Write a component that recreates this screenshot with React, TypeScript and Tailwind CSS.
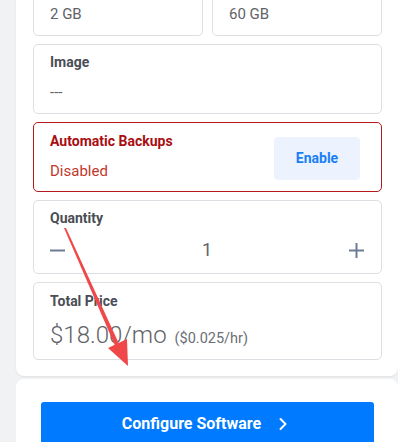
import { ChevronRight } from 'lucide-react';

function InfoCard({ label, value }: { label: string; value: string }) {
  return (
    <div className="h-[70px] rounded-[5px] border border-[#dcdfe3] bg-white px-[16px] pt-[7px]">
      <div className="text-[14px] font-bold leading-[20px] text-[#4a4e55]">{label}</div>
      <div className="mt-[8px] text-[15px] leading-[24px] text-[#5f6368]">{value}</div>
    </div>
  );
}

export default function App() {
  return (
    <div
      className="relative flex h-[442px] w-[398px] overflow-hidden bg-[#f1f2f4] pl-[16px]"
      style={{ fontFamily: 'Roboto, "Liberation Sans", sans-serif' }}
    >
      <div className="flex min-w-0 flex-1 flex-col">
        {/* Summary panel (top scrolled out of view) */}
        <div className="-mt-[34px] rounded-b-[8px] bg-white pb-[16px] pl-[17px] pr-[16px] shadow-[0_1px_2px_rgba(0,0,0,0.08)]">
          <div className="flex flex-col gap-2">
            <div className="grid grid-cols-2 gap-[9px]">
              <InfoCard label="Memory" value="2 GB" />
              <InfoCard label="Storage" value="60 GB" />
            </div>

            <InfoCard label="Image" value="---" />

            {/* Backups */}
            <div className="flex h-[70px] items-center justify-between rounded-[5px] border border-[#b3191b] bg-white pl-[16px] pr-[21px]">
              <div className="-mt-[3px]">
                <div className="text-[14px] font-bold leading-[20px] text-[#a80e12]">Automatic Backups</div>
                <div className="mt-[10px] text-[15px] leading-[20px] text-[#c0392b]">Disabled</div>
              </div>
              <button className="mt-[3px] h-[43px] w-[86px] rounded-[4px] bg-[#ecf3ff] text-[14px] font-bold text-[#1a7ff5]">
                Enable
              </button>
            </div>

            {/* Quantity */}
            <div className="h-[74px] rounded-[5px] border border-[#dcdfe3] bg-white pl-[16px] pr-[17px] pt-[7px]">
              <div className="text-[14px] font-bold leading-[20px] text-[#4a4e55]">Quantity</div>
              <div className="mt-[10px] flex items-center justify-between">
                <svg width="15" height="15" viewBox="0 0 15 15">
                  <line x1="0" y1="7.5" x2="15" y2="7.5" stroke="#6c7a97" strokeWidth="2" />
                </svg>
                <span className="text-[18px] leading-[24px] text-[#5f6368]">1</span>
                <svg width="15" height="15" viewBox="0 0 15 15">
                  <line x1="0" y1="7.5" x2="15" y2="7.5" stroke="#6c7a97" strokeWidth="2" />
                  <line x1="7.5" y1="0" x2="7.5" y2="15" stroke="#6c7a97" strokeWidth="2" />
                </svg>
              </div>
            </div>

            {/* Total price */}
            <div className="h-[78px] rounded-[5px] border border-[#dcdfe3] bg-white px-[16px] pt-[8px]">
              <div className="text-[14px] font-bold leading-[20px] text-[#4a4e55]">Total Price</div>
              <div className="mt-[9px] flex items-baseline gap-[8px]">
                <span className="text-[24px] font-light leading-[30px] text-[#5f6368]">$18.00/mo</span>
                <span className="text-[14.5px] text-[#6b6f75]">($0.025/hr)</span>
              </div>
            </div>
          </div>
        </div>

        {/* Action panel */}
        <div className="mt-[3px] flex-1 rounded-t-[8px] bg-white pl-[25px] pr-[24px] pt-[23px]">
          <button className="flex h-[44px] w-full items-center justify-center gap-[12px] rounded-[3px] bg-[#007bff] text-[16px] font-bold text-white">
            Configure Software
            <ChevronRight className="h-[20px] w-[20px]" strokeWidth={2.3} />
          </button>
        </div>
      </div>

      {/* Annotation arrow */}
      <svg className="pointer-events-none absolute left-0 top-0" width="398" height="442">
        <polygon points="64,228 66,228 120,346 116,348" fill="#f04848" />
        <polygon points="128,366 108,348 127,339" fill="#f04848" />
      </svg>
    </div>
  );
}
